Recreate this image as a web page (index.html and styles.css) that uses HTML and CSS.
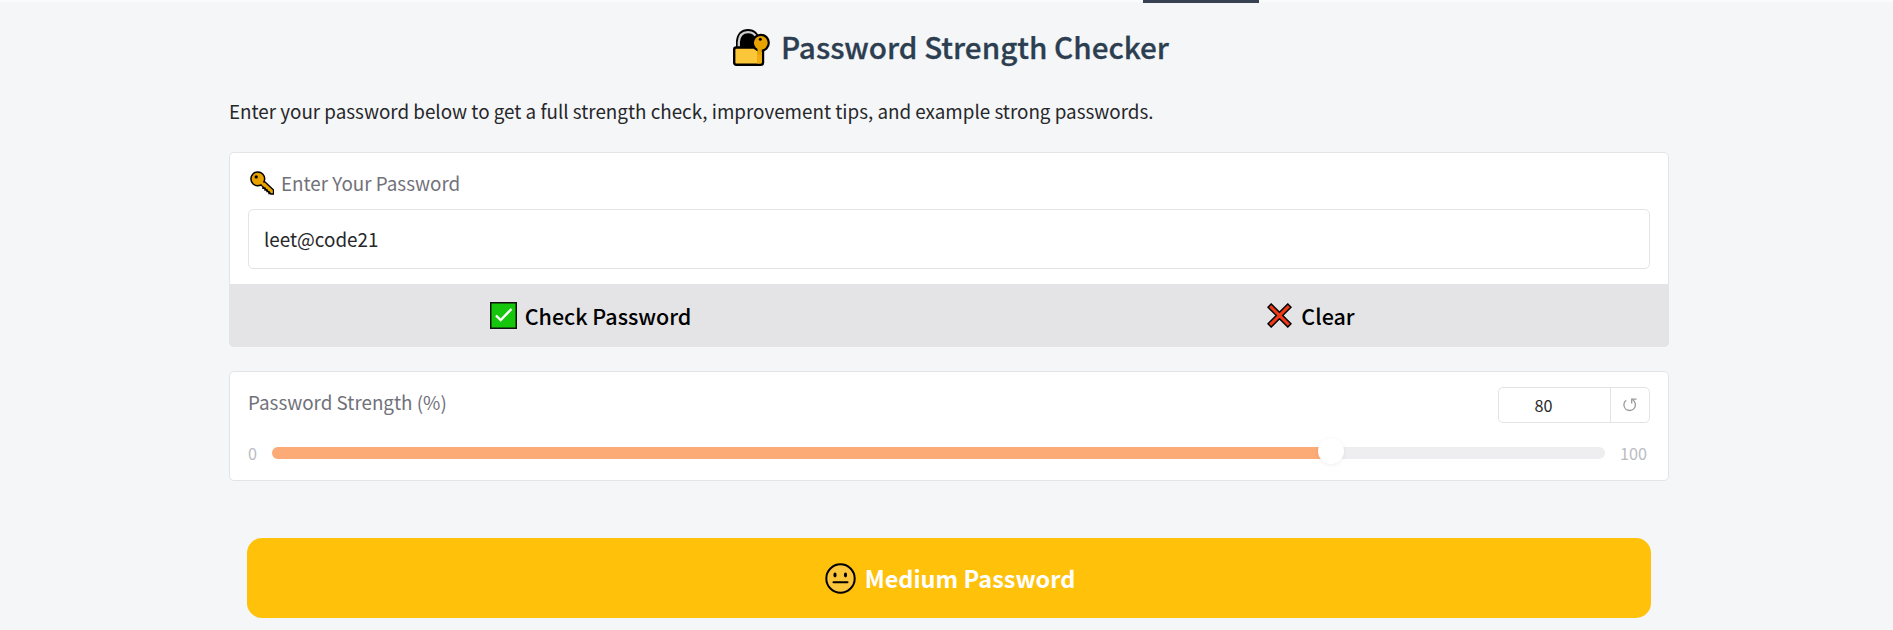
FILE: index.html
```html
<!DOCTYPE html>
<html lang="en">
<head>
<meta charset="utf-8">
<title>Password Strength Checker</title>
<link rel="stylesheet" href="styles.css">
</head>
<body>
<div class="topbar"><span class="topbar-tab"></span></div>
<main class="page">
  <h1 class="title">
    <svg class="icon-lock" viewBox="0 0 37 37" width="37" height="37">
      <path d="M4 18V12C5 4.500 9 1 15 1S25 5 26 12V18Z" fill="#000" stroke="#000" stroke-width="2"/>
      <path d="M5.800 19V13C6.300 6.500 10 3.200 15 3.200C19.500 3.200 22.500 6 23.500 9" fill="none" stroke="#d0cfce" stroke-width="2.300"/>
      <rect x="1.200" y="18.500" width="28.800" height="17.300" rx="2" fill="#fcc63b" stroke="#000" stroke-width="2.400"/>
      <path d="M24 19H28.800V33L27.500 34.600H24Z" fill="#f0ad10"/>
      <circle cx="27.800" cy="13.800" r="8" fill="#e8a200" stroke="#000" stroke-width="2.200"/>
      <path d="M24.500 18H28.800V26H24.500Z" fill="#e8a200"/>
      <circle cx="27.300" cy="10.200" r="1.500" fill="#000"/>
    </svg>
    <span>Password Strength Checker</span>
  </h1>
  <p class="intro">Enter your password below to get a full strength check, improvement tips, and example strong passwords.</p>
  <section class="card">
    <div class="field">
      <label class="label" for="password">
        <svg class="icon-key" viewBox="0 0 24 24" width="24" height="24">
          <path d="M11 14L21 23H23.500V19L14 10Z" fill="#e8a200" stroke="#000" stroke-width="1.300"/>
          <circle cx="7.800" cy="7.800" r="6.900" fill="#e8a200" stroke="#000" stroke-width="1.500"/>
          <path d="M10.500 12.500L12.500 10.500L17 15L14.500 16.500Z" fill="#e8a200"/>
          <path d="M13 15.500V17.200H15V19H17V20.600H19V22.500H21" fill="none" stroke="#000" stroke-width="1.400"/>
          <circle cx="6.200" cy="5.900" r="1.600" fill="#000"/>
        </svg>
        <span>Enter Your Password</span>
      </label>
      <input class="input" id="password" type="text" value="leet@code21">
    </div>
    <div class="actions">
      <button class="action" type="button">
        <svg viewBox="0 0 27 27" width="27" height="27">
          <rect x="0.750" y="0.750" width="25.500" height="25.500" fill="#16c60c" stroke="#111" stroke-width="1.500"/>
          <path d="M6 13.500L10.700 18L21.500 7" fill="none" stroke="#fff" stroke-width="2.400"/>
        </svg>
        <span>Check Password</span>
      </button>
      <button class="action action-clear" type="button">
        <svg viewBox="0 0 25 25" width="25" height="25">
          <path d="M4.200 1L12.500 9.300L20.800 1L24 4.200L15.700 12.500L24 20.800L20.800 24L12.500 15.700L4.200 24L1 20.800L9.300 12.500L1 4.200Z" fill="#f03a17" stroke="#000" stroke-width="1.500"/>
        </svg>
        <span>Clear</span>
      </button>
    </div>
  </section>
  <section class="card meter">
    <div class="meter-head">
      <span class="label">Password Strength (%)</span>
      <div class="number">
        <span class="number-value">80</span>
        <button class="reset" type="button" aria-label="Reset">
          <svg viewBox="0 0 14 14" width="14" height="14" fill="none" stroke="#999" stroke-width="1.300">
            <path d="M3.200 2.300C1.500 3.500 0.800 5.200 0.900 7C1.100 10.300 3.600 12.500 6.700 12.500C10 12.500 12.400 10 12.400 7C12.400 4.500 11.200 2.500 9 1.200"/>
            <path d="M13.500 1.200H8.700V5.500"/>
          </svg>
        </button>
      </div>
    </div>
    <div class="slider">
      <span class="bound">0</span>
      <div class="track"><div class="fill" style="width:79.500%"></div><span class="thumb"></span></div>
      <span class="bound bound-max">100</span>
    </div>
  </section>
  <div class="result">
    <svg viewBox="0 0 31 31" width="31" height="31">
      <circle cx="15.500" cy="15.500" r="14.200" fill="#fcc63b" stroke="#000" stroke-width="2"/>
      <path d="M8.500 19.200H22.500" stroke="#000" stroke-width="2" stroke-linecap="round"/>
      <ellipse cx="10" cy="12" rx="1.600" ry="2.400"/>
      <ellipse cx="20.500" cy="12" rx="1.600" ry="2.400"/>
    </svg>
    <span>Medium Password</span>
  </div>
</main>
</body>
</html>
```
FILE: styles.css
```css
* { box-sizing: border-box; }
body {
  margin: 0;
  height: 630px;
  overflow: hidden;
  background: #f4f6f8;
  color: #27272a;
  font-family: "Source Sans Pro", "Noto Sans CJK SC", sans-serif;
  font-size: 18.820px;
}
button, input { font: inherit; margin: 0; }
.topbar {
  height: 3px;
  padding-left: 1143px;
  background: linear-gradient(#fafbfd 2px, #f4f6f8 2px);
}
.topbar-tab { display: block; width: 116px; height: 3px; background: #374151; }
.page { width: 1440px; margin-left: 229px; }
.title {
  display: flex;
  height: 90px;
  margin: 0;
  padding: 26px 0 0 504px;
  gap: 11px;
  color: #2c3e50;
  font-size: 29.650px;
  font-weight: 500;
  line-height: 40px;
  white-space: nowrap;
  -webkit-text-stroke: 0.300px #2c3e50;
}
.title span { margin-top: -2px; }
.icon-lock { flex: none; }
.intro { height: 59px; margin: 0; line-height: 35px; white-space: nowrap; }
.card { border: 1px solid #e4e4e7; border-radius: 5px; background: #fff; }
.field { height: 131px; padding: 15px 18px 0; }
.label { display: flex; color: #71717a; line-height: 29px; }
.field .label { height: 41px; padding-left: 2px; gap: 7px; }
.icon-key { margin-top: 3px; }
.input {
  display: block;
  width: 100%;
  height: 60px;
  padding: 0 15px 2px;
  border: 1px solid #e4e4e7;
  border-radius: 5px;
  background: #fff;
  color: #27272a;
}
.actions {
  display: grid;
  grid-template-columns: 1fr 1fr;
  height: 63px;
  margin: 0 -1px -1px;
  border-radius: 0 0 5px 5px;
  background: #e4e4e7;
}
.action {
  display: flex;
  align-items: center;
  justify-content: center;
  gap: 8px;
  padding: 0 0 0 3px;
  border: 0;
  background: none;
  color: #000;
  font-size: 21.500px;
  font-weight: 500;
}
.action-clear { gap: 9px; padding-left: 4px; }
.meter { height: 110px; margin-top: 24px; padding: 15px 18px; }
.meter-head { display: flex; justify-content: space-between; height: 59px; }
.number {
  display: flex;
  width: 152px;
  height: 36px;
  border: 1px solid #e4e4e7;
  border-radius: 5px;
  font-size: 16.200px;
  line-height: 34px;
}
.number-value { flex: 1; padding-right: 22px; text-align: center; }
.reset {
  display: flex;
  align-items: center;
  justify-content: center;
  width: 39px;
  padding: 0;
  border: 0;
  border-left: 1px solid #e4e4e7;
  background: none;
}
.slider { display: flex; align-items: center; height: 14px; color: #bbbbc2; font-size: 16.200px; }
.bound { width: 24px; }
.bound-max { width: 45px; padding-left: 15px; }
.track { position: relative; flex: 1; height: 12px; border-radius: 6px; background: #eeeef0; }
.fill { height: 12px; border-radius: 6px 0 0 6px; background: #fcab77; }
.thumb {
  position: absolute;
  top: -9px;
  left: calc(79.500% - 14px);
  width: 26px;
  height: 26px;
  border-radius: 50%;
  background: #fff;
  box-shadow: 0 1px 4px rgba(0, 0, 0, 0.07);
}
.result {
  display: flex;
  align-items: center;
  justify-content: center;
  gap: 9px;
  height: 80px;
  margin: 57px 18px 0;
  padding-left: 2px;
  border-radius: 15px;
  background: #ffc10a;
  color: #fff;
  font-size: 23.500px;
  font-weight: 700;
}
```
